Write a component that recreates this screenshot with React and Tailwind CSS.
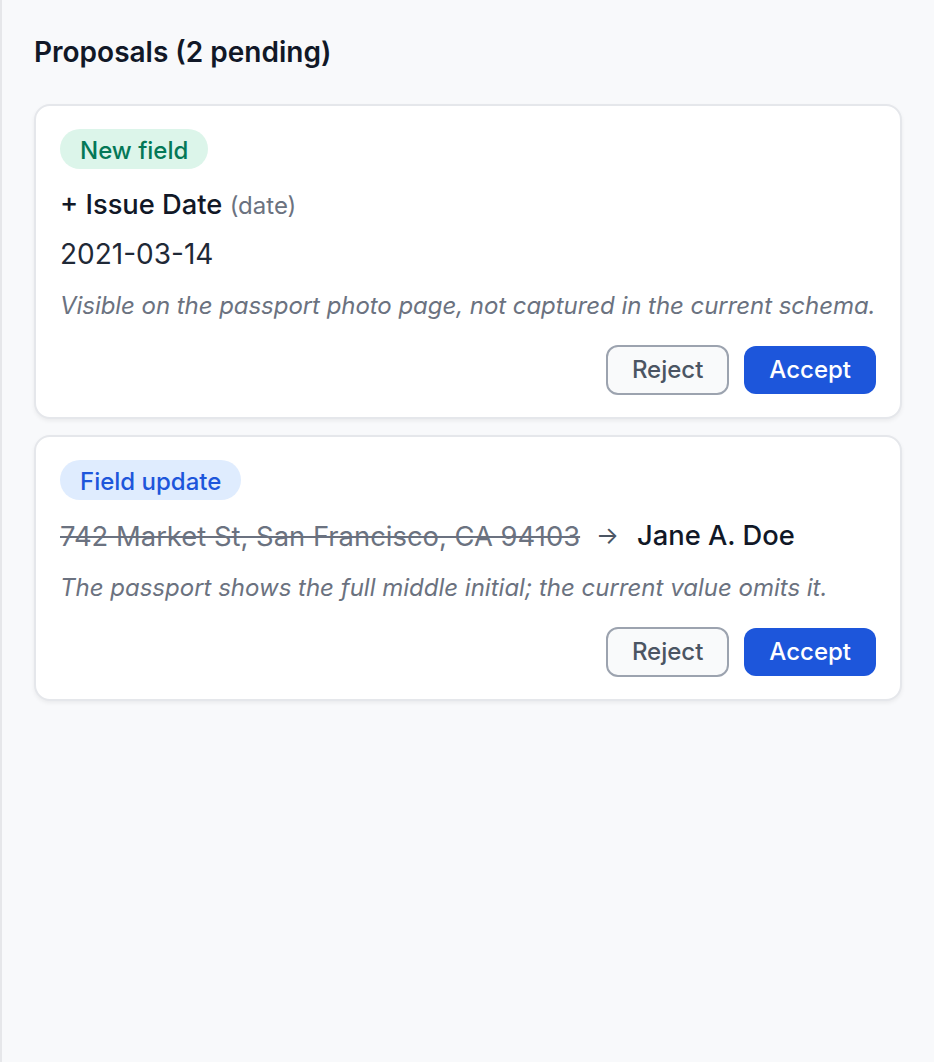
import React from "react";

function Badge({ children, tone }) {
  const cls =
    tone === "green"
      ? "bg-[#dcf5ea] text-[#047857]"
      : "bg-[#dfecfe] text-[#1d56db]";
  return (
    <span
      className={`inline-flex h-[40px] items-center rounded-full px-[20px] pt-[4px] text-[24px] font-[450] leading-[32px] ${cls}`}
    >
      {children}
    </span>
  );
}

function Buttons() {
  return (
    <div className="mt-[7px] flex items-center justify-end gap-[15px]">
      <button className="h-[50px] rounded-[12px] border-2 border-[#9ca3af] bg-[#f9fafb] px-[24px] text-[24px] font-[450] leading-[32px] text-[#4b5563]">
        Reject
      </button>
      <button className="h-[48px] rounded-[12px] bg-[#1d56db] px-[25px] text-[24px] font-[450] leading-[32px] text-white">
        Accept
      </button>
    </div>
  );
}

function Card({ children }) {
  return (
    <div className="flex flex-col gap-[16px] rounded-[16px] border-2 border-[#e5e7eb] bg-white px-[24px] pt-[23px] pb-[22px] shadow-[0_2px_4px_rgba(0,0,0,0.06)]">
      {children}
    </div>
  );
}

export default function App() {
  return (
    <div
      className="min-h-[1062px] w-[934px] border-l-2 border-[#e6e7ea] bg-[#f8f9fb] pl-[32px] pr-[32px] pt-[32px]"
      style={{ fontFamily: "Inter, 'Noto Sans', sans-serif" }}
    >
      <h2 className="text-[28px] font-semibold leading-[40px] text-[#111827]">
        Proposals (2 pending)
      </h2>
      <div className="mt-[32px] flex flex-col gap-[16px]">
        <Card>
          <div className="flex">
            <Badge tone="green">New field</Badge>
          </div>
          <div className="flex flex-col gap-[8px]">
            <div className="text-[27.3px] font-[450] leading-[40px] text-[#111827]">
              + Issue Date{" "}
              <span className="text-[24px] font-normal text-[#6b7280]">(date)</span>
            </div>
            <div className="text-[28px] leading-[40px] text-[#1f2937]">2021-03-14</div>
          </div>
          <p className="whitespace-nowrap text-[24px] italic leading-[32px] tracking-[-0.05px] text-[#6b7280]">
            Visible on the passport photo page, not captured in the current schema.
          </p>
          <Buttons />
        </Card>
        <Card>
          <div className="flex">
            <Badge tone="blue">Field update</Badge>
          </div>
          <div className="flex items-center leading-[40px]">
            <span className="text-[27.4px] text-[#6b7280] line-through decoration-[2px]">
              742 Market St, San Francisco, CA 94103
            </span>
            <span className="ml-[16px] text-[24px] text-[#4b5563]">→</span>
            <span className="ml-[18px] text-[27.3px] font-[450] text-[#111827]">Jane A. Doe</span>
          </div>
          <p className="whitespace-nowrap text-[24px] italic leading-[32px] text-[#6b7280]">
            The passport shows the full middle initial; the current value omits it.
          </p>
          <Buttons />
        </Card>
      </div>
    </div>
  );
}
